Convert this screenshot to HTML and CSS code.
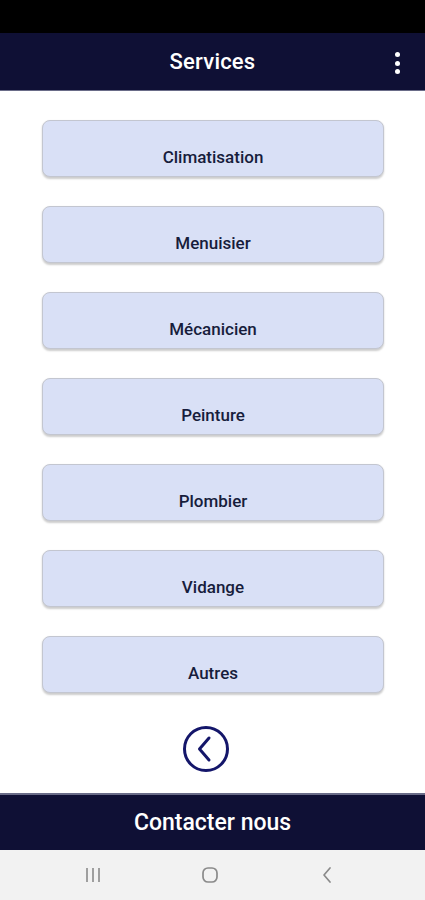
FILE: index.html
```html
<!DOCTYPE html>
<html>
<head>
<meta charset="utf-8">
<link rel="stylesheet" href="styles.css">
</head>
<body>
<div class="screen">
  <div class="statusbar"></div>
  <header class="appbar">
    <span class="title">Services</span>
    <span class="menu"><i></i><i></i><i></i></span>
  </header>
  <main class="content">
    <div class="list">
      <button class="svc">Climatisation</button>
      <button class="svc">Menuisier</button>
      <button class="svc">Mécanicien</button>
      <button class="svc">Peinture</button>
      <button class="svc">Plombier</button>
      <button class="svc">Vidange</button>
      <button class="svc">Autres</button>
    </div>
    <div class="back">
      <svg width="48" height="48" viewBox="0 0 48 48">
        <circle cx="24" cy="24" r="21.5" fill="none" stroke="#14166a" stroke-width="3"/>
        <path d="M27 13 L17.5 24 L27 35" fill="none" stroke="#14166a" stroke-width="3" stroke-linecap="round" stroke-linejoin="round"/>
      </svg>
    </div>
  </main>
  <footer class="contact">Contacter nous</footer>
  <nav class="navbar">
    <span class="nav-item">
      <svg width="18" height="18" viewBox="0 0 18 18"><path d="M3 2v14M9 2v14M15 2v14" stroke="#8a8a8a" stroke-width="1.6"/></svg>
    </span>
    <span class="nav-item">
      <svg width="20" height="20" viewBox="0 0 20 20"><rect x="3" y="3" width="14" height="14" rx="5" fill="none" stroke="#8a8a8a" stroke-width="1.7"/></svg>
    </span>
    <span class="nav-item">
      <svg width="18" height="18" viewBox="0 0 18 18"><path d="M12 2 L6 9 L12 16" fill="none" stroke="#8a8a8a" stroke-width="1.7" stroke-linecap="round" stroke-linejoin="round"/></svg>
    </span>
  </nav>
</div>
</body>
</html>
```
FILE: styles.css
```css
* { box-sizing: border-box; }
html, body { margin: 0; padding: 0; }
body { font-family: Roboto, "Liberation Sans", sans-serif; background: #fff; }
.screen { width: 425px; height: 900px; display: flex; flex-direction: column; overflow: hidden; }
.statusbar { height: 33px; background: #000; flex: none; }
.appbar {
  height: 58px; flex: none; background: #0f1035;
  display: flex; align-items: center; justify-content: center; position: relative;
  border-bottom: 1px solid #6a6c88;
}
.title { color: #fff; font-size: 22px; font-weight: 500; letter-spacing: 0.2px; }
.menu { position: absolute; right: 25px; top: 19px; display: flex; flex-direction: column; gap: 3.5px; }
.menu i { display: block; width: 5px; height: 5px; border-radius: 50%; background: #fff; }
.content { flex: 1; display: flex; flex-direction: column; align-items: center; padding-top: 29px; }
.list { display: flex; flex-direction: column; gap: 29px; }
.svc {
  width: 342px; height: 57px; margin-left: 1px;
  background: #d9e0f6; border: 1.5px solid #c3c6d0; border-radius: 8px;
  box-shadow: 0 1.5px 2px rgba(0,0,0,0.2);
  font-family: Roboto, "Liberation Sans", sans-serif; font-size: 17px; font-weight: 500;
  color: #171d3c; padding: 17px 0 0 0; cursor: pointer;
}
.back { margin-top: 32px; margin-right: 13px; line-height: 0; }
.contact {
  height: 57px; flex: none; background: #0f1035; color: #fff;
  display: flex; align-items: center; justify-content: center;
  font-size: 23px; font-weight: 500; border-top: 2px solid #6a6c88;
}
.navbar {
  height: 50px; flex: none; background: #f2f2f2;
  display: flex; align-items: center; justify-content: space-between; padding: 0 89px 0 84px;
}
.nav-item { line-height: 0; }
```
